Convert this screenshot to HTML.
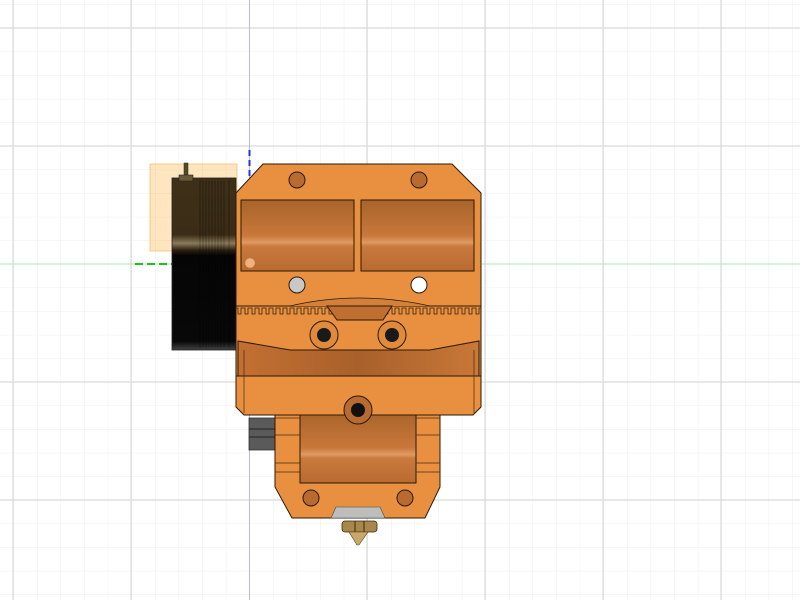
<!DOCTYPE html>
<html><head><meta charset="utf-8"><style>html,body{margin:0;padding:0;background:#fff;overflow:hidden}svg{display:block}</style></head>
<body>
<svg width="800" height="600" viewBox="0 0 800 600" xmlns="http://www.w3.org/2000/svg">
<defs>
<linearGradient id="ch" x1="0" y1="0" x2="0" y2="1">
<stop offset="0" stop-color="#a8642a"/><stop offset="0.5" stop-color="#c9773a"/><stop offset="0.6" stop-color="#e09a62"/><stop offset="0.65" stop-color="#c97a3e"/><stop offset="1" stop-color="#b86a30"/></linearGradient>
<linearGradient id="tr" x1="0" y1="0" x2="1" y2="0">
<stop offset="0" stop-color="#c37032"/><stop offset="0.5" stop-color="#a9602a"/><stop offset="1" stop-color="#c87838"/></linearGradient>
<linearGradient id="cyl" x1="0" y1="0" x2="0" y2="1">
<stop offset="0" stop-color="#3e3018"/><stop offset="0.33" stop-color="#3a2c16"/><stop offset="0.38" stop-color="#8a7a5a"/><stop offset="0.42" stop-color="#2a2010"/><stop offset="0.45" stop-color="#050505"/><stop offset="0.95" stop-color="#080808"/><stop offset="1" stop-color="#444"/></linearGradient>
<pattern id="grid" width="23.6" height="23.6" patternUnits="userSpaceOnUse" x="13.4" y="4.4">
<path d="M0 0H23.6M0 0V23.6" stroke="#ededed" stroke-width="1" fill="none"/></pattern>
<pattern id="teeth" width="7" height="10" patternUnits="userSpaceOnUse" x="236" y="306">
<path d="M0 2H2V8H5V2H7" stroke="#3a220c" stroke-width="0.8" fill="none"/></pattern>
</defs>
<rect width="800" height="600" fill="url(#grid)"/>
<g stroke="#dadada" stroke-width="1.2">
<line x1="13" y1="0" x2="13" y2="600"/><line x1="131" y1="0" x2="131" y2="600"/><line x1="367" y1="0" x2="367" y2="600"/><line x1="485" y1="0" x2="485" y2="600"/><line x1="603" y1="0" x2="603" y2="600"/><line x1="721" y1="0" x2="721" y2="600"/>
<line x1="0" y1="28" x2="800" y2="28"/><line x1="0" y1="146" x2="800" y2="146"/><line x1="0" y1="382" x2="800" y2="382"/><line x1="0" y1="500" x2="800" y2="500"/>
</g>
<line x1="249.5" y1="0" x2="249.5" y2="600" stroke="#b8b8f0" stroke-width="1"/>
<line x1="0" y1="264" x2="800" y2="264" stroke="#a8e8a8" stroke-width="1"/>
<line x1="135" y1="264" x2="250" y2="264" stroke="#1fc01f" stroke-width="2" stroke-dasharray="8,4"/>
<line x1="249.5" y1="150" x2="249.5" y2="264" stroke="#2233dd" stroke-width="2" stroke-dasharray="6,4"/>

<rect x="150" y="164" width="87" height="87" fill="#ffb84a" fill-opacity="0.35" stroke="#f5c070" stroke-width="0.8"/>
<rect x="172" y="178" width="64" height="172" fill="url(#cyl)" stroke="#222" stroke-width="0.8"/>
<g stroke="#000" stroke-opacity="0.5" stroke-width="0.6">
<line x1="200" y1="180" x2="200" y2="348"/><line x1="229" y1="180" x2="229" y2="348"/>
<line x1="203" y1="181" x2="203" y2="347"/><line x1="206" y1="181" x2="206" y2="347"/><line x1="209" y1="181" x2="209" y2="347"/><line x1="212" y1="181" x2="212" y2="347"/><line x1="215" y1="181" x2="215" y2="347"/><line x1="218" y1="181" x2="218" y2="347"/><line x1="221" y1="181" x2="221" y2="347"/><line x1="224" y1="181" x2="224" y2="347"/></g>
<rect x="184" y="163" width="4" height="14" fill="#4a5020" stroke="#222" stroke-width="0.5"/>
<rect x="179" y="175" width="14" height="6" fill="#6a5a38" stroke="#222" stroke-width="0.6"/>

<rect x="249" y="418" width="28" height="32" fill="#5a5a5a" stroke="#333" stroke-width="0.8"/>
<line x1="249" y1="429" x2="277" y2="429" stroke="#222"/><line x1="249" y1="437" x2="277" y2="437" stroke="#222"/>

<path d="M275 412H440V487L425 518H292L275 487Z" fill="#e8903f" stroke="#2a1a0a" stroke-width="1"/>
<rect x="300" y="412" width="116" height="71" fill="url(#ch)" stroke="#2a1a0a" stroke-width="1"/>
<path d="M275 418H300M275 435H300M275 463H300M275 472H300M416 418H440M416 435H440M416 463H440M416 472H440" stroke="#4a2a10" stroke-width="0.7"/>
<circle cx="311" cy="498" r="8" fill="#b86a30" stroke="#2a1a0a" stroke-width="1"/>
<circle cx="405" cy="498" r="8" fill="#b86a30" stroke="#2a1a0a" stroke-width="1"/>
<path d="M336 507H380L385 518H331Z" fill="#bdbdbd" stroke="#444" stroke-width="0.6"/>
<rect x="342" y="521" width="35" height="11" rx="3" fill="#a8884a" stroke="#3a2a10" stroke-width="0.8"/>
<line x1="355" y1="521" x2="355" y2="532" stroke="#3a2a10"/><line x1="364" y1="521" x2="364" y2="532" stroke="#3a2a10"/>
<path d="M349 532H368L359 545H357Z" fill="#c8a868" stroke="#5a4020" stroke-width="0.6"/>

<path d="M263 164H452L481 193V407L473 415H244L236 407V193Z" fill="#e8903f" stroke="#2a1a0a" stroke-width="1"/>
<rect x="241" y="200" width="113" height="71" fill="url(#ch)" stroke="#2a1a0a" stroke-width="1"/>
<rect x="361" y="200" width="113" height="71" fill="url(#ch)" stroke="#2a1a0a" stroke-width="1"/>
<circle cx="297" cy="180" r="8" fill="#b86a30" stroke="#2a1a0a" stroke-width="1"/>
<circle cx="419" cy="180" r="8" fill="#b86a30" stroke="#2a1a0a" stroke-width="1"/>
<circle cx="297" cy="285" r="8" fill="#c8c8c8" stroke="#2a1a0a" stroke-width="1"/>
<circle cx="419" cy="285" r="8" fill="#ffffff" stroke="#2a1a0a" stroke-width="1"/>
<circle cx="250" cy="263" r="5" fill="#f0b080" stroke="#c08050" stroke-width="0.5"/>
<path d="M236 306H481" stroke="#2a1a0a" stroke-width="1"/>
<path d="M290 306Q358 290 430 306" stroke="#2a1a0a" stroke-width="0.8" fill="#d4803a"/>
<rect x="236" y="306" width="245" height="10" fill="url(#teeth)"/>
<path d="M327 306H392L383 320H337Z" fill="#bf7030" stroke="#2a1a0a" stroke-width="1"/>
<circle cx="324" cy="335" r="14" fill="#e08a3c" stroke="#2a1a0a" stroke-width="1"/>
<circle cx="324" cy="335" r="7" fill="#1a1a1a"/>
<circle cx="392" cy="335" r="14" fill="#e08a3c" stroke="#2a1a0a" stroke-width="1"/>
<circle cx="392" cy="335" r="7" fill="#1a1a1a"/>
<path d="M238 341L290 350H430L479 341V376H238Z" fill="url(#tr)" stroke="#2a1a0a" stroke-width="1"/>
<line x1="244" y1="350" x2="244" y2="376" stroke="#4a2a10" stroke-width="0.7"/>
<line x1="474" y1="350" x2="474" y2="376" stroke="#4a2a10" stroke-width="0.7"/>
<line x1="236" y1="376" x2="481" y2="376" stroke="#2a1a0a"/>
<line x1="244" y1="376" x2="244" y2="413" stroke="#4a2a10" stroke-width="0.7"/>
<line x1="474" y1="376" x2="474" y2="413" stroke="#4a2a10" stroke-width="0.7"/>
<circle cx="358" cy="410" r="14" fill="#b86a30" stroke="#2a1a0a" stroke-width="1"/>
<circle cx="358" cy="410" r="7" fill="#111"/>
</svg>
</body></html>
